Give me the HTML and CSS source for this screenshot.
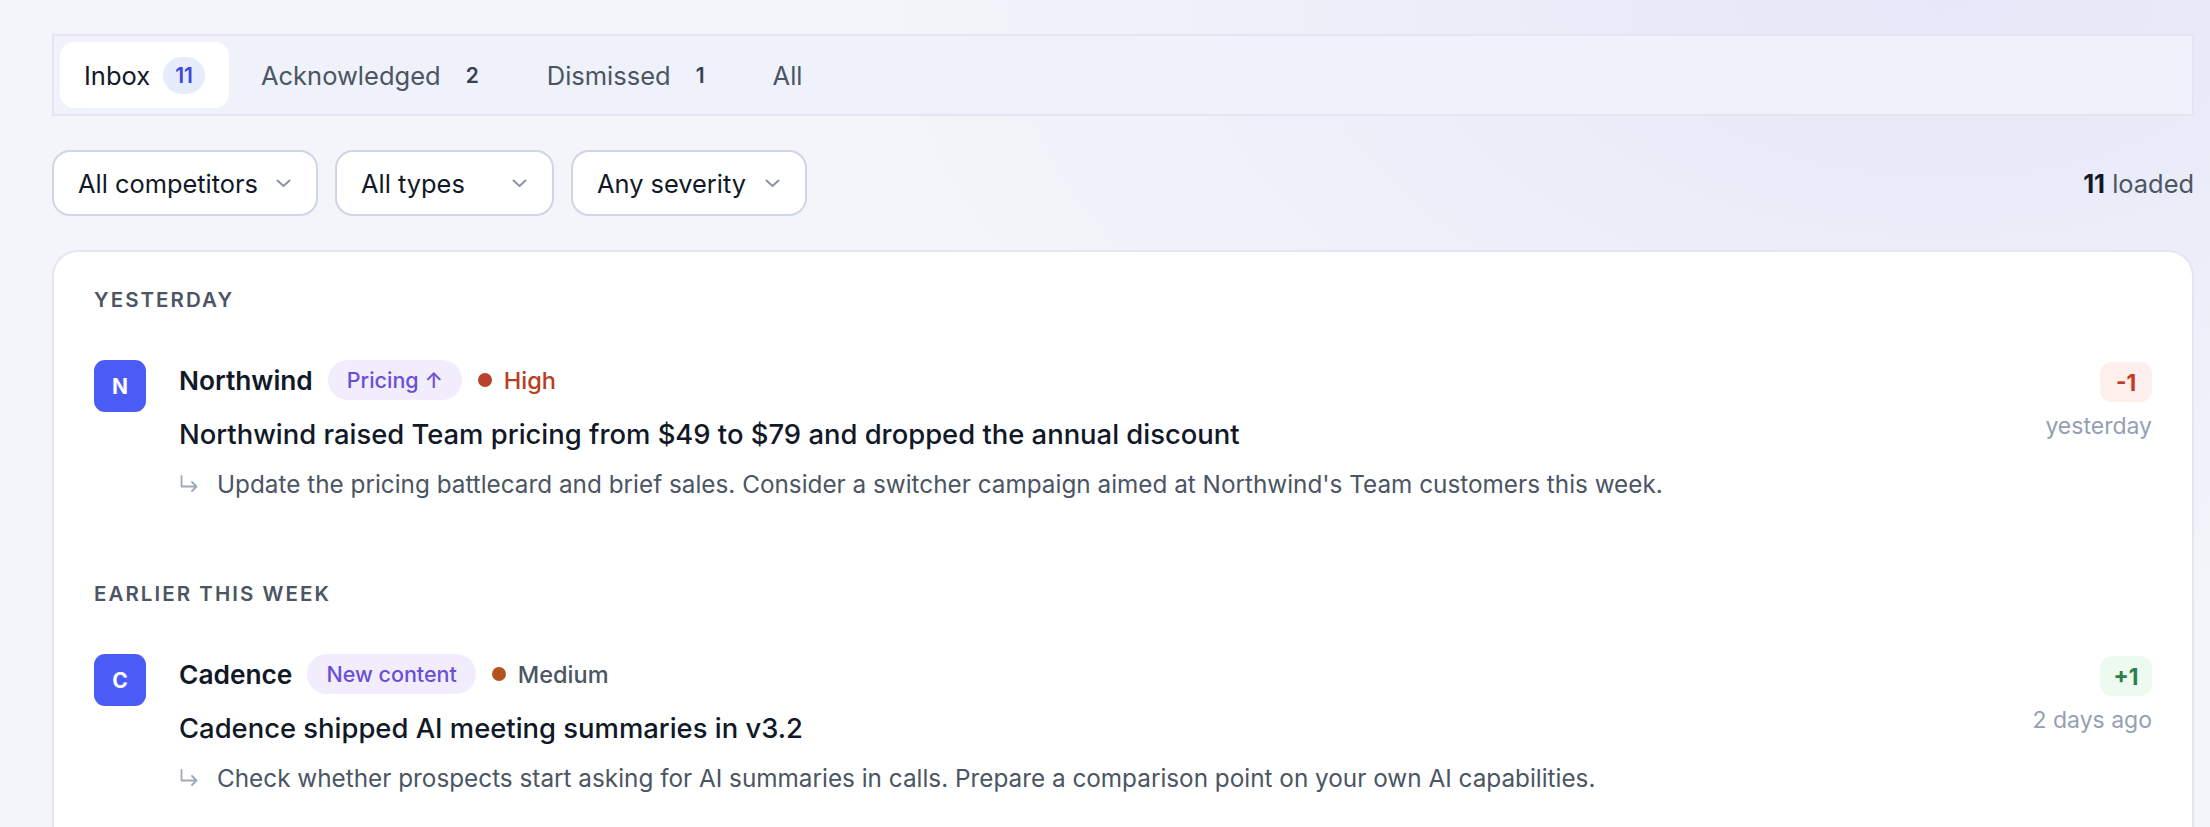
FILE: index.html
```html
<!DOCTYPE html>
<html lang="en">
<head>
    <meta charset="UTF-8">
    <meta name="viewport" content="width=device-width, initial-scale=1.0">
    <title>Signals Inbox</title>
    <link rel="stylesheet" href="styles.css">
</head>
<body>
    <div class="page">

        <nav class="tabs">
            <div class="tab active">Inbox <span class="count">11</span></div>
            <div class="tab">Acknowledged <span class="count">2</span></div>
            <div class="tab">Dismissed <span class="count">1</span></div>
            <div class="tab">All</div>
        </nav>

        <div class="toolbar">
            <div class="filters">
                <div class="filter filter-competitor">
                    All competitors
                    <svg class="chevron" viewBox="0 0 15 9"><polyline points="1.5,1.5 7.5,7 13.5,1.5"/></svg>
                </div>
                <div class="filter filter-type">
                    All types
                    <svg class="chevron" viewBox="0 0 15 9"><polyline points="1.5,1.5 7.5,7 13.5,1.5"/></svg>
                </div>
                <div class="filter filter-severity">
                    Any severity
                    <svg class="chevron" viewBox="0 0 15 9"><polyline points="1.5,1.5 7.5,7 13.5,1.5"/></svg>
                </div>
            </div>
            <div class="loaded"><strong>11</strong> loaded</div>
        </div>

        <div class="card">

            <section class="group">
                <h3 class="group-label">Yesterday</h3>

                <div class="signal">
                    <div class="avatar">N</div>
                    <div class="signal-body">
                        <div class="meta">
                            <span class="name">Northwind</span>
                            <span class="tag">Pricing ↑</span>
                            <span class="severity high"><i class="dot"></i>High</span>
                        </div>
                        <div class="title">Northwind raised Team pricing from $49 to $79 and dropped the annual discount</div>
                        <div class="action">
                            <svg class="arrow" viewBox="0 0 20 18"><path d="M2.5 1 V11.5 H17.5 M13 7 L17.5 11.5 L13 16"/></svg>
                            Update the pricing battlecard and brief sales. Consider a switcher campaign aimed at Northwind's Team customers this week.
                        </div>
                    </div>
                    <div class="signal-side">
                        <span class="delta down">-1</span>
                        <span class="time">yesterday</span>
                    </div>
                </div>
            </section>

            <section class="group">
                <h3 class="group-label">Earlier this week</h3>

                <div class="signal">
                    <div class="avatar">C</div>
                    <div class="signal-body">
                        <div class="meta">
                            <span class="name">Cadence</span>
                            <span class="tag">New content</span>
                            <span class="severity medium"><i class="dot"></i>Medium</span>
                        </div>
                        <div class="title">Cadence shipped AI meeting summaries in v3.2</div>
                        <div class="action">
                            <svg class="arrow" viewBox="0 0 20 18"><path d="M2.5 1 V11.5 H17.5 M13 7 L17.5 11.5 L13 16"/></svg>
                            Check whether prospects start asking for AI summaries in calls. Prepare a comparison point on your own AI capabilities.
                        </div>
                    </div>
                    <div class="signal-side">
                        <span class="delta up">+1</span>
                        <span class="time">2 days ago</span>
                    </div>
                </div>
            </section>

        </div>

    </div>
</body>
</html>
```

FILE: styles.css
```css
html, body {
    margin: 0;
    height: 100%;
}

body {
    font-family: Inter, "Noto Sans", sans-serif;
    color: #111827;
    background:
        radial-gradient(ellipse 1100px 620px at 88% 0%, #e6e7f8 0%, rgba(230, 231, 248, 0) 100%),
        #f4f5fa;
    overflow: hidden;
}

.page {
    padding: 34px 16px 0 52px;
}

/* tabs */

.tabs {
    display: flex;
    gap: 8px;
    padding: 6px;
    background: #eff2fa;
    border: 2px solid #e3e6f0;
}

.tab {
    display: flex;
    align-items: center;
    gap: 13px;
    height: 66px;
    padding: 0 24px;
    font-size: 25.5px;
    color: #4b5563;
    border-radius: 14px;
}

.tab.active {
    background: #fff;
    color: #111827;
}

.count {
    display: inline-flex;
    align-items: center;
    justify-content: center;
    height: 37px;
    padding: 0 12px;
    border-radius: 19px;
    font-size: 21px;
    font-weight: 600;
    color: #374151;
}

.tab.active .count {
    background: #e7ecfc;
    color: #3b48e0;
}

/* filters */

.toolbar {
    display: flex;
    align-items: center;
    justify-content: space-between;
    margin: 34px 0;
}

.filters {
    display: flex;
    gap: 17px;
}

.filter {
    box-sizing: border-box;
    display: flex;
    align-items: center;
    justify-content: space-between;
    height: 66px;
    padding: 0 25px 0 24px;
    background: #fff;
    border: 2px solid #cfd5e6;
    border-radius: 18px;
    font-size: 25.4px;
    color: #111827;
}

.filter-competitor { width: 266px; }
.filter-type { width: 219px; }
.filter-severity { width: 236px; }

.chevron {
    width: 15px;
    height: 9px;
    fill: none;
    stroke: #8b93a7;
    stroke-width: 2;
    stroke-linecap: round;
    stroke-linejoin: round;
}

.loaded {
    font-size: 25.4px;
    color: #4b5563;
}

.loaded strong {
    color: #111827;
    font-weight: 700;
}

/* card */

.card {
    background: #fff;
    border: 2px solid #e3e5f0;
    border-bottom: none;
    border-radius: 26px 26px 0 0;
    padding: 34px 40px 60px;
    min-height: 600px;
}

.group + .group {
    margin-top: 79px;
}

.group-label {
    margin: 0 0 46px;
    font-size: 20.5px;
    line-height: 28px;
    font-weight: 600;
    letter-spacing: 0.1em;
    text-transform: uppercase;
    color: #4b5563;
}

.signal {
    display: flex;
    align-items: flex-start;
}

.avatar {
    flex: none;
    width: 52px;
    height: 52px;
    border-radius: 11px;
    background: #4b5cf6;
    color: #fff;
    font-size: 21px;
    font-weight: 700;
    display: flex;
    align-items: center;
    justify-content: center;
    margin-right: 33px;
}

.signal-body {
    flex: 1;
}

.meta {
    display: flex;
    align-items: center;
    height: 40px;
    margin-bottom: 16px;
}

.name {
    font-size: 26.3px;
    font-weight: 600;
    margin-right: 15px;
}

.tag {
    display: inline-flex;
    align-items: center;
    height: 40px;
    padding: 0 19px;
    border-radius: 20px;
    background: #f1edfd;
    color: #6b4fd8;
    font-size: 21.5px;
    font-weight: 500;
    margin-right: 16px;
}

.severity {
    display: inline-flex;
    align-items: center;
    font-size: 23.5px;
    font-weight: 500;
}

.dot {
    width: 14px;
    height: 14px;
    border-radius: 50%;
    margin-right: 12px;
}

.severity.high { color: #b73e1f; }
.severity.high .dot { background: #b9432a; }
.severity.medium { color: #4b5563; }
.severity.medium .dot { background: #b3541e; }

.title {
    font-size: 27.4px;
    line-height: 36px;
    font-weight: 500;
    color: #111827;
}

.action {
    display: flex;
    align-items: center;
    margin-top: 15px;
    font-size: 24.3px;
    line-height: 34px;
    color: #4b5563;
}

.arrow {
    flex: none;
    width: 20px;
    height: 18px;
    margin-right: 18px;
    fill: none;
    stroke: #a0a8b8;
    stroke-width: 1.8;
    stroke-linecap: round;
    stroke-linejoin: round;
}

.signal-side {
    display: flex;
    flex-direction: column;
    align-items: flex-end;
    gap: 8px;
    padding-top: 2px;
}

.delta {
    display: inline-flex;
    align-items: center;
    justify-content: center;
    width: 52px;
    height: 40px;
    border-radius: 12px;
    font-size: 22.5px;
    font-weight: 700;
}

.delta.down {
    background: #fcefec;
    color: #c23b22;
}

.delta.up {
    background: #ecfaf0;
    color: #2e7d4a;
}

.time {
    font-size: 23px;
    line-height: 32px;
    color: #94a0b4;
}
```
